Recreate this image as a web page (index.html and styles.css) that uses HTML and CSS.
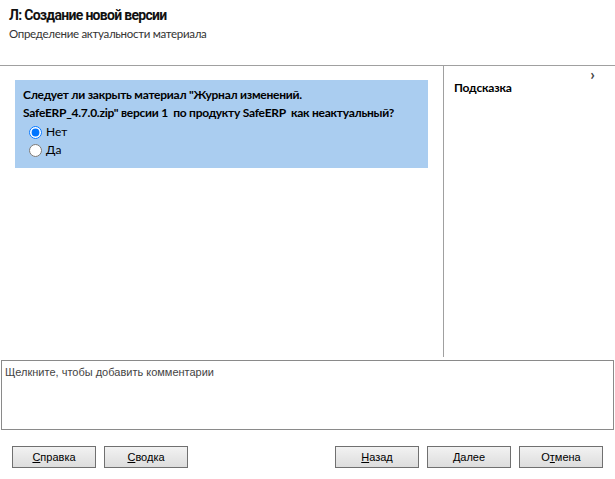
FILE: index.html
```html
<!DOCTYPE html>
<html lang="ru">
<head>
  <meta charset="UTF-8" />
  <title>Создание новой версии</title>
  <link rel="stylesheet" href="styles.css">
</head>
<body>

<div class="header">
  <h1>Л: Создание новой версии</h1>
  <p class="subtitle">Определение актуальности материала</p>
</div>

<div class="main">
  <div class="content">
    <div class="question">
      <p class="text">Следует ли закрыть материал "Журнал изменений.<br>SafeERP_4.7.0.zip" версии 1&nbsp; по продукту SafeERP&nbsp; как неактуальный?</p>
      <label class="option"><input type="radio" name="answer" checked> Нет</label>
      <label class="option"><input type="radio" name="answer"> Да</label>
    </div>
  </div>
  <div class="hint">
    <span class="chevron">&#x203A;</span>
    <h3>Подсказка</h3>
  </div>
</div>

<div class="comment">Щелкните, чтобы добавить комментарии</div>

<div class="buttons">
  <div class="group">
    <button><u>С</u>правка</button>
    <button><u>С</u>водка</button>
  </div>
  <div class="group">
    <button><u>Н</u>азад</button>
    <button><u>Д</u>алее</button>
    <button>О<u>т</u>мена</button>
  </div>
</div>

</body>
</html>
```

FILE: styles.css
```css
body {
  margin: 0;
  background: #fff;
  font-family: Lato, "Noto Sans", sans-serif;
  color: #000;
  width: 615px;
  height: 479px;
  overflow: hidden;
}

.header {
  border-bottom: 1px solid #a0a0a0;
  padding-left: 9px;
  box-sizing: border-box;
  height: 66px;
}

h1 {
  margin: 0;
  padding-top: 5px;
  font-family: Roboto, "Noto Sans", sans-serif;
  font-size: 14px;
  font-weight: bold;
  line-height: 20px;
  letter-spacing: -0.7px;
  color: #111;
  white-space: nowrap;
}

.subtitle {
  margin: 0;
  font-size: 11.5px;
  line-height: 18px;
  letter-spacing: -0.3px;
  color: #333;
  white-space: nowrap;
}

.main {
  display: flex;
  height: 291px;
}

.content {
  width: 444px;
  border-right: 1px solid #a0a0a0;
  padding: 14px 15px 0 15px;
  box-sizing: border-box;
  height: 291px;
}

.question {
  background: #aacdf0;
  width: 413px;
  height: 88px;
  padding: 6px 8px 0 8px;
  box-sizing: border-box;
}

.question .text {
  margin: 0;
  font-size: 12px;
  font-weight: bold;
  line-height: 18px;
  letter-spacing: -0.25px;
  white-space: nowrap;
}

.option {
  display: flex;
  align-items: center;
  font-size: 12px;
  line-height: 18px;
  padding-left: 6px;
  margin-top: 1px;
}

.option + .option {
  margin-top: 0;
}

.option input {
  margin: 0 4px 0 0;
  width: 13px;
  height: 13px;
}

.hint {
  position: relative;
  flex: 1;
  padding: 13px 10px 0 10px;
}

.hint h3 {
  margin: 0;
  font-size: 12px;
  font-weight: bold;
  line-height: 18px;
  letter-spacing: -0.2px;
}

.chevron {
  position: absolute;
  right: 20px;
  top: -2px;
  font-size: 16px;
  font-weight: bold;
  color: #444;
}

.comment {
  margin: 3px 1px 0 1px;
  height: 70px;
  border: 1px solid #8a8a8a;
  box-sizing: border-box;
  padding: 5px 3px;
  font-family: "Liberation Sans", Arial, sans-serif;
  font-size: 11px;
  color: #444;
}

.buttons {
  display: flex;
  justify-content: space-between;
  padding: 16px 12px 0 12px;
}

.group {
  display: flex;
  gap: 8px;
}

button {
  width: 84px;
  height: 22px;
  border: 1px solid #707070;
  background: linear-gradient(#f2f2f2, #dddddd);
  font-family: "Liberation Sans", Arial, sans-serif;
  font-size: 11px;
  color: #000;
  padding: 0;
  margin: 0;
}
```
